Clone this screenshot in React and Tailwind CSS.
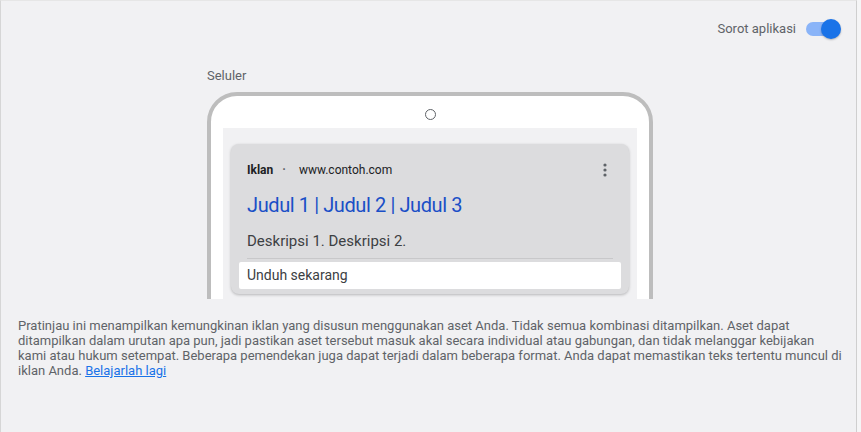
import { useState } from "react";

export default function App() {
  const [on, setOn] = useState(true);

  return (
    <div className="h-[432px] w-[861px] bg-[#f5f5f6]" style={{ fontFamily: "Roboto, 'Liberation Sans', sans-serif" }}>
      <div className="h-full w-[857px] border-l border-r border-t border-l-[#d6d6d6] border-r-[#cfcfcf] border-t-[#e6e6e6] bg-[#f1f1f3]">
        {/* toggle */}
        <div className="flex items-center justify-end gap-[10px] pr-[16px] pt-[17px]">
          <span className="text-[13px] text-[#5f6368]">Sorot aplikasi</span>
          <button
            onClick={() => setOn(!on)}
            className="relative h-[22px] w-[34px]"
          >
            <span className="absolute left-0 right-[1px] top-[4px] h-[14px] rounded-full bg-[#8ab4f8]" />
            <span className="absolute right-[-1px] top-[1px] h-[20px] w-[20px] rounded-full bg-[#1a73e8] shadow-[0_1px_2px_rgba(0,0,0,0.25)]" />
          </button>
        </div>

        {/* preview */}
        <div className="ml-[206px] mt-[28px] w-[446px]">
          <div className="text-[13px] leading-[16px] text-[#5f6368]">Seluler</div>
          <div className="mt-[8px] h-[207px] overflow-hidden">
            <div className="h-[260px] rounded-[30px] border-[4px] border-[#bdbdbd] bg-white px-[12px]">
              <div className="flex h-[32px] items-center justify-center pt-[5px]">
                <span className="h-[11px] w-[11px] rounded-full border border-[#5f6368]" />
              </div>
              <div className="h-[220px] bg-[#f1f1f3] px-[8px] pt-[16px]">
                <div className="rounded-[8px] bg-[#dcdcde] pb-[5px] shadow-[0_1px_3px_rgba(0,0,0,0.25)]">
                  <div className="flex items-center justify-between pl-[16px] pr-[22px] pt-[18px]">
                    <div className="flex items-center text-[12px] leading-[16px] text-[#202124]">
                      <span className="font-bold">Iklan</span>
                      <span className="ml-[9px] font-bold text-[#5f6368]">·</span>
                      <span className="ml-[13px]">www.contoh.com</span>
                    </div>
                    <svg width="4" height="14" viewBox="0 0 4 14" className="fill-[#5f6368]">
                      <circle cx="2" cy="2" r="1.6" />
                      <circle cx="2" cy="7" r="1.6" />
                      <circle cx="2" cy="12" r="1.6" />
                    </svg>
                  </div>
                  <div className="mt-[15px] pl-[16px] text-[20px] leading-[24px] tracking-[-0.4px] text-[#1a4fc7]">
                    Judul 1 | Judul 2 | Judul 3
                  </div>
                  <div className="mt-[15px] pl-[16px] text-[15px] leading-[18px] text-[#3c4043]">
                    Deskripsi 1. Deskripsi 2.
                  </div>
                  <div className="mx-[16px] mt-[8px] border-t border-[#c8c8ca]" />
                  <div className="mx-[8px] mt-[3px] rounded-[2px] bg-white px-[8px] text-[14px] leading-[27px] text-[#3c4043]">
                    Unduh sekarang
                  </div>
                </div>
              </div>
            </div>
          </div>
        </div>

        {/* note */}
        <p className="mt-[19px] pl-[17px] pr-[2px] text-[13px] leading-[15px] text-[#5f6368]">
          Pratinjau ini menampilkan kemungkinan iklan yang disusun menggunakan aset Anda. Tidak semua kombinasi ditampilkan. Aset dapat
          <br />
          ditampilkan dalam urutan apa pun, jadi pastikan aset tersebut masuk akal secara individual atau gabungan, dan tidak melanggar kebijakan
          <br />
          kami atau hukum setempat. Beberapa pemendekan juga dapat terjadi dalam beberapa format. Anda dapat memastikan teks tertentu muncul di
          <br />
          iklan Anda.{" "}
          <a href="#" className="text-[#1a73e8] underline">Belajarlah lagi</a>
        </p>
      </div>
    </div>
  );
}
